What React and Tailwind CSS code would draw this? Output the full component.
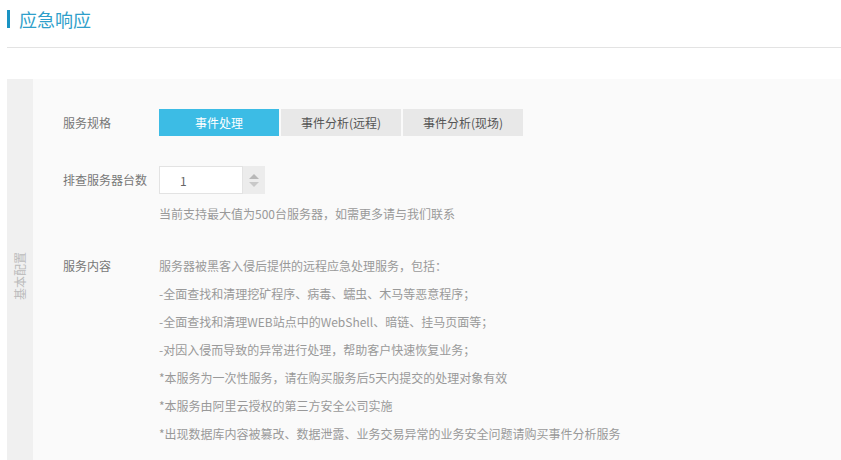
import { useState } from 'react'

const specs = ['事件处理', '事件分析(远程)', '事件分析(现场)']

const contentLines = [
  '服务器被黑客入侵后提供的远程应急处理服务，包括：',
  '-全面查找和清理挖矿程序、病毒、蠕虫、木马等恶意程序；',
  '-全面查找和清理WEB站点中的WebShell、暗链、挂马页面等；',
  '-对因入侵而导致的异常进行处理，帮助客户快速恢复业务；',
  '*本服务为一次性服务，请在购买服务后5天内提交的处理对象有效',
  '*本服务由阿里云授权的第三方安全公司实施',
  '*出现数据库内容被篡改、数据泄露、业务交易异常的业务安全问题请购买事件分析服务'
]

export default function App(){
  const [active, setActive] = useState(0)
  const [count, setCount] = useState(1)

  return (
    <div className="h-[460px] w-[841px] overflow-hidden bg-white font-['Noto_Sans_CJK_SC',sans-serif] text-[12px]">
      <div className="ml-[7px]">
        <div className="flex h-[48px] items-start border-b border-[#e3e3e3] pt-[8px]">
          <span className="mt-[2px] h-[18px] w-[3px] bg-[#1a93c3]" />
          <h1 className="ml-[9px] text-[18px] leading-[22px] text-[#2f9fca]">应急响应</h1>
        </div>

        <div className="mt-[31px] flex h-[400px] bg-[#fafafa]">
          <div className="flex w-[26px] items-start justify-center bg-[#f0f0f0]">
            <span className="mt-[188px] -rotate-90 whitespace-nowrap text-[12px] text-[#bbbbbb]">基本配置</span>
          </div>

          <div className="pl-[30px] pt-[30px] text-[#777]">
            <div className="flex items-center">
              <span className="w-[96px]">服务规格</span>
              <div className="flex gap-[2px]">
                {specs.map((spec, i) => (
                  <button
                    key={spec}
                    type="button"
                    onClick={() => setActive(i)}
                    className={`h-[27px] w-[120px] text-[12px] ${
                      active === i ? 'bg-[#3cbce5] text-white' : 'bg-[#e8e8e8] text-[#555]'
                    }`}
                  >
                    {spec}
                  </button>
                ))}
              </div>
            </div>

            <div className="mt-[30px] flex items-center">
              <span className="w-[96px]">排查服务器台数</span>
              <div className="flex h-[28px]">
                <input
                  value={count}
                  onChange={(e) => setCount(e.target.value)}
                  className="h-full w-[84px] border border-[#e3e3e3] bg-white pl-[20px] text-[12px] text-[#666] outline-none"
                />
                <div className="flex w-[22px] flex-col items-center justify-center gap-[3px] bg-[#ececec]">
                  <span className="h-0 w-0 border-x-[5px] border-b-[5px] border-x-transparent border-b-[#b8b8b8]" />
                  <span className="h-0 w-0 border-x-[5px] border-t-[5px] border-x-transparent border-t-[#c8c8c8]" />
                </div>
              </div>
            </div>
            <p className="ml-[96px] mt-[11px] text-[#999]">当前支持最大值为500台服务器，如需更多请与我们联系</p>

            <div className="mt-[29px] flex">
              <span className="w-[96px] leading-[28px]">服务内容</span>
              <ul className="leading-[28px] text-[#999]">
                {contentLines.map((line) => (
                  <li key={line}>{line}</li>
                ))}
              </ul>
            </div>
          </div>
        </div>
      </div>
    </div>
  )
}
